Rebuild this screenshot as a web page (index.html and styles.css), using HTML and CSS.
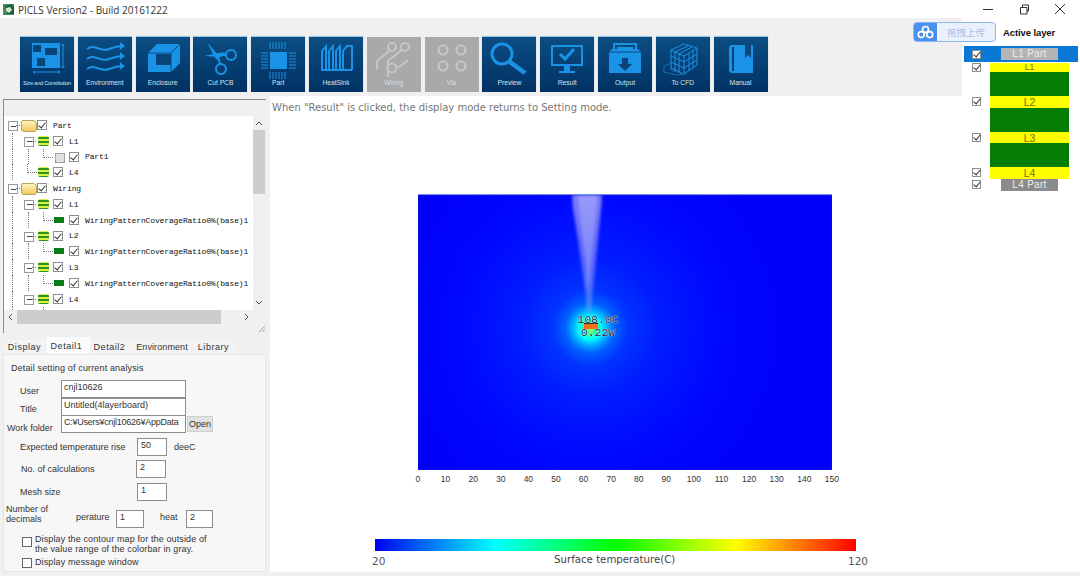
FILE: index.html
```html
<!DOCTYPE html>
<html lang="en">
<head>
<meta charset="utf-8">
<title>PICLS Version2</title>
<link rel="stylesheet" href="styles.css">
</head>
<body>
<div class="app">
  <header class="titlebar">
    <svg class="app-icon" viewBox="0 0 12 13"><rect x="0" y="1" width="11" height="11" fill="#3f8f5f"/><path d="M2 3l6-2 3 3v7H4z" fill="#1c5d3a"/><path d="M3 5l4-1 2 3-3 3-3-2z" fill="#d9e8c8"/></svg>
    <span class="title">PICLS Version2 - Build 20161222</span>
    <div class="winctl">
      <svg viewBox="0 0 12 12"><path d="M1 6.5h10" stroke="#333" fill="none"/></svg>
      <svg viewBox="0 0 12 12"><path d="M2.5 4.5h6.500v6.500h-6.500zM4.500 4.500v-2.500h6v6h-2" stroke="#333" fill="none"/></svg>
      <svg viewBox="0 0 12 12"><path d="M1 1l10 10M11 1L1 11" stroke="#333" fill="none"/></svg>
    </div>
  </header>
  <div class="body">
    <div class="main">
      <nav class="toolbar">
        <div class="tbtn"><svg viewBox="0 0 54 43"><rect class="f" x="12" y="6" width="28" height="25"/><rect class="d" x="13" y="8" width="8" height="7"/><rect class="d" x="25" y="11" width="12" height="7"/><rect class="d" x="17" y="21" width="8" height="8"/><path class="s1" d="M43 7v24M41.500 9l1.500-2 1.500 2M41.500 29l1.500 2 1.500-2M13 35h27M15 33.500l-2 1.500 2 1.500M38 33.500l2 1.500-2 1.500"/></svg><span>Size and Constitution</span></div>
        <div class="tbtn"><svg viewBox="0 0 54 43"><path class="s2" d="M9 12c8-6 14 4 22 0 5-2 9-3 14-3M9 22c8-6 14 4 22 0 5-2 9-3 14-3M9 32c8-6 14 4 22 0 5-2 9-3 14-3"/><path class="f" d="M42 5l5 4-5 4zM42 15l5 4-5 4zM42 25l5 4-5 4z"/></svg><span>Environment</span></div>
        <div class="tbtn"><svg viewBox="0 0 54 43"><path class="f" d="M12 16l9-9h23v19l-9 9H12z"/><path class="d" d="M20 17h15v11H20z"/><path d="M35 16l9-9M12 16h23v19" stroke="#0b4a80" fill="none"/></svg><span>Enclosure</span></div>
        <div class="tbtn"><svg viewBox="0 0 54 43"><path class="f" d="M14 5l11 13 2 6-5-3zM11 19l14-3 8-1-5 5z"/><circle class="s2" cx="38" cy="18" r="5"/><circle class="s2" cx="28" cy="32" r="5"/><path class="s2" d="M24 17l3 10M27 18l6 0"/></svg><span>Cut PCB</span></div>
        <div class="tbtn"><svg viewBox="0 0 54 43"><rect class="f" x="19" y="15" width="17" height="17"/><path class="s1" d="M19 5v7M22 5v7M25 5v7M28 5v7M31 5v7M34 5v7M19 35v7M22 35v7M25 35v7M28 35v7M31 35v7M34 35v7M10 16h7M10 19h7M10 22h7M10 25h7M10 28h7M10 31h7M38 16h7M38 19h7M38 22h7M38 25h7M38 28h7M38 31h7"/></svg><span>Part</span></div>
        <div class="tbtn"><svg viewBox="0 0 54 43"><path class="s2" d="M13 33V14l4-5v24M20 33V14l4-5v24M27 33V14l4-5v24M34 33V14l4-5h5v24M12 33h31"/></svg><span>HeatSink</span></div>
        <div class="tbtn off"><svg viewBox="0 0 54 43"><g class="s3"><circle cx="25" cy="10" r="4"/><circle cx="38" cy="10" r="4"/><circle cx="25" cy="31" r="4.500"/><path d="M10 32v-8l12-10M21 40V24l14-11M31 31l10-8"/></g></svg><span>Wiring</span></div>
        <div class="tbtn off"><svg viewBox="0 0 54 43"><g class="s3"><circle cx="18" cy="13" r="4.500"/><circle cx="36" cy="13" r="4.500"/><circle cx="18" cy="29" r="4.500"/><circle cx="36" cy="29" r="4.500"/></g></svg><span>Via</span></div>
        <div class="tbtn"><svg viewBox="0 0 54 43"><circle class="s3b" cx="20" cy="17" r="10"/><path d="M28 25l15 11" stroke="#1a93e6" stroke-width="4.500" fill="none"/></svg><span>Preview</span></div>
        <div class="tbtn"><svg viewBox="0 0 54 43"><rect class="s2" x="12" y="9" width="30" height="19"/><path class="s3b" d="M20 17l5 5 9-10"/><path class="f" d="M24 29h6v5h5v2H19v-2h5z"/></svg><span>Result</span></div>
        <div class="tbtn"><svg viewBox="0 0 54 43"><path class="s2" d="M16 14V7h22v7M19 11h16"/><path class="f" d="M11 15l3-3h26l3 3v21H11z"/><path class="d" d="M24 21h6v6h4l-7 7-7-7h4z"/><path d="M11 15h32" stroke="#0b4a80"/></svg><span>Output</span></div>
        <div class="tbtn"><svg viewBox="0 0 54 43"><path class="s1" d="M15 13l13-6 13 4v17l-13 9-13-6zM15 13l13 6 13-8M28 19v18M19 15l13-6M23 17l13-7M19 15v19M23 17v19M15 19l13 6 13-8M15 25l13 6 13-8M33 16v18M37 13v18"/><path d="M8 29l7-3v7l13 4-7 1-13-3z" stroke="#1a6fb0" fill="none"/></svg><span>To CFD</span></div>
        <div class="tbtn"><svg viewBox="0 0 54 43"><path class="f" d="M15 10l2-2h22v28H17l-2-2z"/><path class="d" d="M18 10h2v24h-2z"/><path d="M31 8h6v13l-3-3-3 3z" fill="#0b4a80"/></svg><span>Manual</span></div>
      </nav>
      <div class="workspace">
        <aside class="side">
          <div class="treebox">
            <div class="treewrap">
              <div class="tree">
                <div class="row"><i class="exp"></i><i class="folder"></i><i class="cb on"></i><b>Part</b></div>
                <div class="row"><i class="g on"></i><i class="exp"></i><i class="layer"></i><i class="cb on"></i><b>L1</b></div>
                <div class="row"><i class="g on"></i><i class="g on"></i><i class="elbow"></i><i class="chip"></i><i class="cb on"></i><b>Part1</b></div>
                <div class="row"><i class="g on"></i><i class="elbow e2"></i><i class="layer"></i><i class="cb on"></i><b>L4</b></div>
                <div class="row"><i class="exp"></i><i class="folder"></i><i class="cb on"></i><b>Wiring</b></div>
                <div class="row"><i class="g on"></i><i class="exp"></i><i class="layer"></i><i class="cb on"></i><b>L1</b></div>
                <div class="row"><i class="g on"></i><i class="g on"></i><i class="elbow"></i><i class="wire"></i><i class="cb on"></i><b>WiringPatternCoverageRatio0%(base)1</b></div>
                <div class="row"><i class="g on"></i><i class="exp"></i><i class="layer"></i><i class="cb on"></i><b>L2</b></div>
                <div class="row"><i class="g on"></i><i class="g on"></i><i class="elbow"></i><i class="wire"></i><i class="cb on"></i><b>WiringPatternCoverageRatio0%(base)1</b></div>
                <div class="row"><i class="g on"></i><i class="exp"></i><i class="layer"></i><i class="cb on"></i><b>L3</b></div>
                <div class="row"><i class="g on"></i><i class="g on"></i><i class="elbow"></i><i class="wire"></i><i class="cb on"></i><b>WiringPatternCoverageRatio0%(base)1</b></div>
                <div class="row"><i class="g on"></i><i class="exp"></i><i class="layer"></i><i class="cb on"></i><b>L4</b></div>
                <div class="row"><i class="g on"></i><i class="g"></i><i class="elbow"></i><i class="wire"></i><i class="cb on"></i><b>WiringPatternCoverageRatio0%(base)1</b></div>
              </div>
              <div class="vscroll">
                <svg viewBox="0 0 12 14"><path d="M3 9l3-3 3 3" stroke="#555" fill="none"/></svg>
                <div class="vthumb"></div>
                <div class="spacer"></div>
                <svg viewBox="0 0 12 14"><path d="M3 5l3 3 3-3" stroke="#555" fill="none"/></svg>
              </div>
            </div>
            <div class="hscroll">
              <svg viewBox="0 0 13 14"><path d="M8 4L5 7l3 3" stroke="#555" fill="none"/></svg>
              <div class="hthumb"></div>
              <div class="spacer"></div>
              <svg viewBox="0 0 13 14"><path d="M5 4l3 3-3 3" stroke="#555" fill="none"/></svg>
            </div>
            <div class="grip"><svg viewBox="0 0 8 8"><path d="M7 1L1 7M7 4L4 7" stroke="#aaa" fill="none"/></svg></div>
          </div>
          <div class="tabs">
            <span class="tab t1">Display</span>
            <span class="tab sel">Detail1</span>
            <span class="tab t3">Detail2</span>
            <span class="tab t4">Environment</span>
            <span class="tab t5">Library</span>
          </div>
          <section class="form">
            <p class="heading">Detail setting of current analysis</p>
            <div class="info">
              <label class="li">User</label><div class="field">cnjl10626</div>
              <label class="li">Title</label><div class="field">Untitled(4layerboard)</div>
              <label class="lw">Work folder</label><div class="field path">C:¥Users¥cnjl10626¥AppData</div><button class="open">Open</button>
            </div>
            <div class="nrow r1"><label>Expected temperature rise</label><div class="num">50</div><span class="unit">deeC</span></div>
            <div class="nrow r2"><label>No. of calculations</label><div class="num">2</div></div>
            <div class="nrow r3"><label>Mesh size</label><div class="num">1</div></div>
            <div class="drow">
              <label class="dl">Number of<br>decimals</label>
              <span class="dp">perature</span><div class="num n1">1</div>
              <span class="dh">heat</span><div class="num n2">2</div>
            </div>
            <div class="check c1"><i class="box"></i><span>Display the contour map for the outside of<br>the value range of the colorbar in gray.</span></div>
            <div class="check c2"><i class="box"></i><span>Display message window</span></div>
          </section>
        </aside>
        <main class="canvas">
          <p class="msg">When "Result" is clicked, the display mode returns to Setting mode.</p>
          <div class="heat">
            <svg class="plume" viewBox="0 0 414 276" preserveAspectRatio="none">
              <defs>
                <linearGradient id="pl" x1="0" y1="0" x2="0" y2="1"><stop offset="0" stop-color="#a8a8f4" stop-opacity=".75"/><stop offset=".55" stop-color="#9090f8" stop-opacity=".6"/><stop offset="1" stop-color="#80a0ff" stop-opacity=".45"/></linearGradient>
                <filter id="bl"><feGaussianBlur stdDeviation="1.500"/></filter>
              </defs>
              <path d="M154 0h30l-1 14-3 31-5 50-2 20-2 4-2-4-2-20-7-50-5-31z" fill="url(#pl)" filter="url(#bl)"/>
              <path d="M160 0h19l-2 30-4 40-3 30-2-30-5-40z" fill="#d8d8ff" opacity=".3" filter="url(#bl)"/>
            </svg>
            <div class="part"></div>
            <div class="val">108.0C<br>0.22W</div>
          </div>
          <div class="ticks"><span>0</span><span>10</span><span>20</span><span>30</span><span>40</span><span>50</span><span>60</span><span>70</span><span>80</span><span>90</span><span>100</span><span>110</span><span>120</span><span>130</span><span>140</span><span>150</span></div>
          <div class="cbar"></div>
          <div class="cbar-labels"><span class="lo">20</span><span class="cap">Surface temperature(C)</span><span class="hi">120</span></div>
        </main>
      </div>
    </div>
    <aside class="layers">
      <h2>Active layer</h2>
      <div class="lrow sel"><i class="cb on"></i><div class="ptag a">L1 Part</div></div>
      <div class="lrow top"><i class="cb on"></i><div class="cu">L1</div></div>
      <div class="core"></div>
      <div class="lrow"><i class="cb on"></i><div class="cu">L2</div></div>
      <div class="core"></div>
      <div class="lrow"><i class="cb on"></i><div class="cu">L3</div></div>
      <div class="core"></div>
      <div class="lrow"><i class="cb on"></i><div class="cu">L4</div></div>
      <div class="lrow last"><i class="cb on"></i><div class="ptag b">L4 Part</div></div>
    </aside>
  </div>
  <div class="upload">
    <span class="cloud"><svg viewBox="0 0 20 16"><g fill="none" stroke="#fff" stroke-width="2"><circle cx="10" cy="5" r="3.500"/><circle cx="5" cy="11" r="3.500"/><circle cx="15" cy="11" r="3.500"/></g></svg></span>
    <span class="utext">拖拽上传</span>
  </div>
</div>
</body>
</html>
```

FILE: styles.css
```css
* { box-sizing: border-box; }
html, body { margin: 0; padding: 0; }
body { width: 1080px; height: 576px; overflow: hidden; background: #f0f0f0; }
.app { position: relative; width: 1080px; height: 576px; display: flex; flex-direction: column; font-family: "Liberation Sans", sans-serif; color: #333; }

.titlebar { height: 18px; background: #fff; display: flex; align-items: center; padding-left: 3px; flex: none; }
.app-icon { width: 12px; height: 13px; }
.title { margin-left: 3px; font: 10px "Open Sans", sans-serif; color: #333; padding-top: 1px; }
.winctl { margin-left: auto; display: flex; gap: 24px; padding-right: 14px; }
.winctl svg { width: 12px; height: 12px; }

.body { flex: 1; display: flex; min-height: 0; }
.main { width: 962px; display: flex; flex-direction: column; }
.toolbar { height: 78px; flex: none; display: flex; gap: 3.800px; padding: 19px 0 0 20px; }
.tbtn { width: 54px; height: 55px; display: flex; flex-direction: column; align-items: center; background: linear-gradient(#0b4d83, #013263); box-shadow: 0 -1px 1px #9fc6e2; }
.tbtn svg { width: 54px; height: 43px; flex: none; }
.tbtn span { font-size: 6.700px; line-height: 8px; color: #d4e3ee; white-space: nowrap; margin-top: -1px; }
.tbtn:first-child span { font-size: 5.500px; letter-spacing: -.2px; }
.tbtn.off { background: #a8a9aa; box-shadow: none; }
.tbtn.off span { color: #dedede; }
.f { fill: #1a93e6; }
.d { fill: #0a4378; }
.s1 { stroke: #1a93e6; stroke-width: 1; fill: none; }
.s2 { stroke: #1a93e6; stroke-width: 2; fill: none; }
.s3 { stroke: #c4c5c6; stroke-width: 2.200; fill: none; }
.s3b { stroke: #1a93e6; stroke-width: 3; fill: none; }

.workspace { flex: 1; display: flex; min-height: 0; }
.side { width: 270px; flex: none; padding: 3px 0 0 3px; }
.treebox { position: relative; width: 263px; height: 234px; border-top: 1.500px solid #8a8a8a; border-left: 1px solid #8a8a8a; padding-top: 16px; }
.treewrap { display: flex; height: 194px; }
.tree { width: 249px; background: #fff; overflow: hidden; padding-top: 1px; }
.row { height: 15.800px; display: flex; align-items: stretch; font: 8px "Liberation Mono", monospace; color: #111; }
.row i { flex: none; display: block; position: relative; font-style: normal; }
.row b { font-weight: normal; align-self: center; margin-left: 5px; letter-spacing: -.14px; white-space: nowrap; padding-top: 1px; }
.g { width: 16px; }
.g.on::before { content: ""; position: absolute; left: 8px; top: 0; bottom: 0; border-left: 1px dotted #777; }
.exp { width: 16px; }
.exp::before { content: ""; position: absolute; left: 4px; top: 4px; width: 8px; height: 8px; background: linear-gradient(#444, #444) center / 5px 1px no-repeat #fff; border: 1px solid #999; }
.exp::after { content: ""; position: absolute; left: 12px; top: 8px; width: 4px; border-top: 1px dotted #777; }
.folder { width: 16px; }
.folder::before { content: ""; position: absolute; left: 1px; top: 3px; width: 14px; height: 10px; border-radius: 2px 4px 3px 3px; background: linear-gradient(#fdf3c0, #f2c95a); border: 1px solid #b8a35c; }
.layer { width: 16px; }
.layer::before { content: ""; position: absolute; left: 2px; top: 3px; width: 11px; height: 10px; border-radius: 2px; background: repeating-linear-gradient(#d8f04a 0 1px, #2f8f1f 1px 3px, #d8f04a 3px 4px); }
.elbow { width: 16px; }
.elbow::before { content: ""; position: absolute; left: 7px; top: 0; height: 8px; width: 9px; border-left: 1px dotted #777; border-bottom: 1px dotted #777; }
.e2 { width: 16px; }
.chip { width: 16px; }
.chip::before { content: ""; position: absolute; left: 3px; top: 4px; width: 8px; height: 8px; background: #e0e0e0; border: 1px dashed #999; }
.wire { width: 16px; }
.wire::before { content: ""; position: absolute; left: 2px; top: 5px; width: 10px; height: 6px; background: #0a7d16; }
.cb { flex: none; display: block; width: 10px; height: 10px; background: #fff; border: 1px solid #8f8f8f; position: relative; }
.row i.cb { width: 10px; height: 10px; margin: 3px 1px 0 1px; }
.cb.on::after { content: ""; position: absolute; left: 2px; top: 0; width: 3px; height: 6px; border: solid #333; border-width: 0 1.500px 1.500px 0; transform: rotate(40deg); }
.vscroll { width: 12px; background: #f0f0f0; display: flex; flex-direction: column; }
.vscroll svg { width: 12px; height: 14px; flex: none; }
.vthumb { height: 64px; background: #cdcdcd; flex: none; }
.spacer { flex: 1; }
.hscroll { height: 14px; width: 249px; display: flex; background: #f0f0f0; }
.hscroll svg { width: 13px; height: 14px; flex: none; }
.hthumb { width: 204px; background: #cdcdcd; flex: none; }
.grip { position: absolute; right: 0; bottom: 0; width: 8px; height: 8px; }
.grip svg { display: block; width: 8px; height: 8px; }

.tabs { display: flex; height: 21px; padding: 7px 0 0 2px; align-items: flex-end; font-size: 9px; letter-spacing: .55px; }
.tab { height: 14px; line-height: 15px; background: #f3f3f3; text-align: center; white-space: nowrap; }
.t1 { width: 39px; }
.tab.sel { width: 44px; height: 17px; background: #fbfbfb; margin: 0 0 0 2px; line-height: 18px; padding-right: 3px; }
.t3 { width: 43px; padding-right: 4px; }
.t4 { width: 58px; letter-spacing: .1px; }
.t5 { width: 41px; margin-left: 2px; }
.form { width: 263px; height: 218px; background: #f7f7f7; border: 1px solid #e4e4e4; font-size: 9px; position: relative; }
.heading { margin: 0; padding: 8px 0 0 7px; line-height: 11px; height: 25px; letter-spacing: .15px; }
.info { display: grid; grid-template-columns: 57px 125px auto; grid-auto-rows: 17.500px; align-items: start; }
.info label { padding-top: 6px; }
.li { grid-column: 1; padding-left: 16px; }
.lw { grid-column: 1; padding-left: 3px; white-space: nowrap; padding-top: 8px !important; }
.field { grid-column: 2; height: 18px; background: #fff; border: 1px solid #8d8d8d; padding: 0 2px; line-height: 13px; overflow: hidden; white-space: nowrap; }
.path { letter-spacing: -.25px; }
.open { height: 16px; width: 26px; margin: 1px 0 0 1px; padding: 0; font: 9px "Liberation Sans", sans-serif; color: #333; background: #e2e2e2; border: 1px solid #d0d0d0; }
.nrow { display: flex; align-items: center; height: 18px; }
.nrow label { white-space: nowrap; }
.r1 { margin-top: 5px; padding-left: 16px; }
.r1 label { width: 117px; }
.r2 { margin-top: 4px; padding-left: 17px; }
.r2 label { width: 115px; }
.r3 { margin-top: 5px; padding-left: 16px; }
.r3 label { width: 117px; }
.num { width: 30px; height: 18px; background: #fff; border: 1px solid #8d8d8d; padding: 0 3px; line-height: 13px; }
.unit { margin-left: 7px; }
.drow { display: flex; height: 20px; margin-top: 7px; padding-left: 2px; align-items: flex-end; }
.dl { width: 68px; line-height: 10px; align-self: flex-start; margin-top: -4px; }
.dp { width: 42px; padding-left: 2px; line-height: 18px; padding-bottom: 2px; }
.dh { width: 26px; margin-left: 16px; line-height: 18px; padding-bottom: 2px; }
.num.n1 { width: 28px; }
.num.n2 { width: 27px; }
.check { display: flex; padding-left: 18px; line-height: 10px; letter-spacing: .12px; }
.c1 { margin-top: 6px; height: 20px; }
.c2 { margin-top: 3px; }
.box { flex: none; width: 10px; height: 10px; background: #fff; border: 1px solid #666; margin-right: 3px; }
.c1 .box { margin-top: 3px; }
.c2 .box { margin-top: 1px; }

.canvas { flex: 1; height: 476px; background: #fff; display: flex; flex-direction: column; align-items: flex-start; padding-left: 2px; font-family: "DejaVu Sans", sans-serif; color: #444; }
.msg { margin: 6px 0 0; font-size: 10px; line-height: 11px; color: #777; white-space: nowrap; }
.heat { position: relative; width: 414px; height: 276px; margin: 81px 0 0 146px; flex: none; border-top: 1px solid #6f8cf0; background: radial-gradient(circle at 172px 133px, #c8ff60 0, #30ff90 6px, #00ffff 11px, #00b0ff 17px, #0060ff 25px, #0034ff 38px, #001cff 70px, #0008ff 130px, #0000f8 200px); box-shadow: inset 0 0 2px #1c2ec0; }
.plume { position: absolute; left: 0; top: 0; width: 414px; height: 276px; }
.part { position: absolute; left: 166px; top: 128px; width: 14px; height: 6px; background: #f0701c; border-top: 1px solid #222; }
.val { position: absolute; left: 159px; top: 118px; width: 42px; text-align: center; font: 11.500px/13px "Liberation Mono", monospace; color: #0c2448; text-shadow: 0 0 1px #fff, 0 0 1px #fff; letter-spacing: 0; }
.ticks { display: grid; grid-template-columns: repeat(16, 27.600px); margin: 3px 0 0 132.200px; font: 8.500px/12px "Liberation Sans", sans-serif; color: #333; text-align: center; flex: none; }
.cbar { width: 481px; height: 12px; margin: 54px 0 0 103px; flex: none; background: linear-gradient(90deg, #0000f0, #00ffff 25%, #00ff00 50%, #ffff00 75%, #ff0000); }
.cbar-labels { display: flex; width: 496px; margin: 3px 0 0 100px; align-items: flex-start; color: #555; }
.lo, .hi { font-size: 10.500px; line-height: 14px; }
.cap { flex: 1; text-align: center; font-size: 10.200px; line-height: 12px; padding-right: 4px; color: #444; }

.layers { width: 118px; flex: none; background: #fff; padding-top: 8px; height: 554px; }
.layers h2 { margin: 0 0 6px 41px; font: bold 9.500px/14px "Liberation Sans", sans-serif; color: #111; height: 14px; letter-spacing: -.1px; }
.lrow { display: flex; align-items: center; height: 11.500px; margin-left: 10px; width: 98px; position: relative; }
.lrow .cb { width: 9px; height: 9px; }
.lrow .cb.on::after { left: 2px; top: -1px; }
.lrow.sel { height: 16px; width: 114px; margin: 0 0 1px 2px; padding-left: 8px; background: #0b78d6; }
.lrow.top { height: 9px; }
.lrow.top .cu { height: 9px; font-size: 8.500px; line-height: 9px; }
.lrow.last { height: 12px; }
.cu { margin-left: 9px; width: 79px; height: 11.500px; background: #ffff00; color: #7a6a00; font: 10.500px/12px "Liberation Sans", sans-serif; text-align: center; }
.core { width: 79px; height: 24px; margin-left: 28px; background: #047d04; }
.ptag { color: #eee; font: 10px/12px "Liberation Sans", sans-serif; text-align: center; width: 57px; height: 12px; margin-left: 20px; letter-spacing: .3px; }
.ptag.a { background: #b4b4b4; }
.ptag.b { background: #8b8b8b; }

.upload { position: absolute; left: 913px; top: 22px; width: 83px; height: 20px; display: flex; border: 1px solid #8fb4ee; border-radius: 4px; background: #eaf1fd; overflow: hidden; }
.cloud { width: 23px; background: #4a90ee; display: flex; align-items: center; justify-content: center; }
.cloud svg { width: 17px; height: 14px; }
.utext { flex: 1; font: 9.500px/18px "Noto Sans CJK SC", sans-serif; color: #a9bfe6; text-align: center; }
```
